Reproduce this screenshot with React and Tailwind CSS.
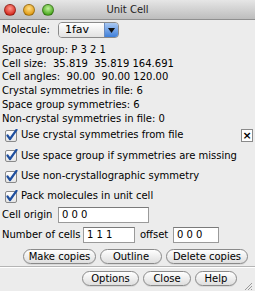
import React from "react";

function Check() {
  return (
    <svg width="13" height="13" viewBox="0 0 13 13" className="shrink-0">
      <defs>
        <linearGradient id="cbg" x1="0" y1="0" x2="0" y2="1">
          <stop offset="0" stopColor="#ffffff" />
          <stop offset="1" stopColor="#e4e4e4" />
        </linearGradient>
      </defs>
      <rect x="0.5" y="1.5" width="11" height="11" rx="1.5" fill="url(#cbg)" stroke="#8a8a8a" />
      <path d="M2.5 6.5 L5 10 L11.5 0.8" fill="none" stroke="#1f4f9e" strokeWidth="2.2" strokeLinecap="round" strokeLinejoin="round" />
    </svg>
  );
}

function Light({ c1, c2 }) {
  return (
    <div
      className="w-[12px] h-[12px] rounded-full border border-black/30"
      style={{ background: `radial-gradient(circle at 50% 35%, ${c1} 0%, ${c2} 75%)` }}
    />
  );
}

function Btn({ w, children }) {
  return (
    <div
      className={`${w} h-[15px] shrink-0 whitespace-nowrap rounded-full border border-[#8a8a8a] bg-gradient-to-b from-white to-[#dedede] flex items-center justify-center leading-[13px] shadow-[0_1px_0_rgba(0,0,0,0.08)]`}
    >
      {children}
    </div>
  );
}

function Entry({ w, children }) {
  return (
    <div className={`${w} h-[16px] shrink-0 whitespace-nowrap bg-white border border-[#9a9a9a] border-t-[#7a7a7a] flex items-center pl-[3px] leading-[14px]`}>
      {children}
    </div>
  );
}

export default function App() {
  return (
    <div className="w-[255px] h-[291px] bg-[#ececec] overflow-hidden flex flex-col text-[10px] text-black whitespace-nowrap font-['DejaVu_Sans',sans-serif]">
      {/* Title bar */}
      <div className="h-[20px] shrink-0 grid grid-cols-[60px_1fr_60px] items-center bg-gradient-to-b from-[#e6e6e6] to-[#bdbdbd] border-b border-[#8f8f8f]">
        <div className="flex items-center gap-[7px] pl-[4px]">
          <Light c1="#ff9a8f" c2="#d62a1e" />
          <Light c1="#ffe08a" c2="#e09a12" />
          <Light c1="#bff29a" c2="#4aa81e" />
        </div>
        <div className="text-center text-[#222] leading-[14px]">Unit Cell</div>
        <div />
      </div>

      {/* Molecule */}
      <div className="mt-[2px] h-[16px] flex items-center pl-[2px]">
        <span className="w-[56px] shrink-0 leading-[14px]">Molecule:</span>
        <div className="w-[61px] h-[16px] flex rounded-[4px] border border-[#8a8a8a] overflow-hidden">
          <div className="flex-1 bg-gradient-to-b from-white to-[#e2e2e2] flex items-center pl-[6px] leading-[14px] text-[11px]">1fav</div>
          <div className="w-[14px] bg-gradient-to-b from-[#a9c8f2] to-[#3e7fd9] border-l border-[#6a8cc0] flex items-center justify-center">
            <svg width="7" height="5" viewBox="0 0 7 5"><path d="M0 0 H7 L3.5 5 Z" fill="#111" /></svg>
          </div>
        </div>
      </div>

      {/* Info */}
      <div className="mt-[5px] pl-[2px] leading-[13.7px]">
        <div>Space group: P 3 2 1</div>
        <div>Cell size:&nbsp; 35.819&nbsp; 35.819 164.691</div>
        <div>Cell angles:&nbsp; 90.00&nbsp; 90.00 120.00</div>
        <div>Crystal symmetries in file: 6</div>
        <div>Space group symmetries: 6</div>
        <div>Non-crystal symmetries in file: 0</div>
      </div>

      {/* Checkboxes */}
      <div className="flex flex-col">
        <div className="h-[20.5px] flex items-center pl-[5px] gap-[3px] leading-[14px]">
          <Check />
          <span>Use crystal symmetries from file</span>
          <div className="ml-auto mr-[2px] w-[12px] h-[13px] bg-white border border-[#8a8a8a] flex items-center justify-center text-[11px] leading-[11px] font-bold">×</div>
        </div>
        <div className="h-[20.5px] flex items-center pl-[5px] gap-[3px] leading-[14px]">
          <Check />
          <span>Use space group if symmetries are missing</span>
        </div>
        <div className="h-[20.5px] flex items-center pl-[5px] gap-[3px] leading-[14px]">
          <Check />
          <span>Use non-crystallographic symmetry</span>
        </div>
        <div className="h-[19px] flex items-center pl-[5px] gap-[3px] leading-[14px]">
          <Check />
          <span>Pack molecules in unit cell</span>
        </div>
      </div>

      {/* Cell origin */}
      <div className="mt-[1px] h-[16px] flex items-center pl-[2px] leading-[14px]">
        <span className="w-[56px] shrink-0">Cell origin</span>
        <Entry w="w-[91px]">0 0 0</Entry>
      </div>
      <div className="mt-[4px] h-[16px] flex items-center pl-[2px] leading-[14px]">
        <span className="w-[81px] shrink-0">Number of cells</span>
        <Entry w="w-[52px]">1 1 1</Entry>
        <span className="ml-[5px] w-[33px] shrink-0">offset</span>
        <Entry w="w-[46px]">0 0 0</Entry>
      </div>

      {/* Copy buttons */}
      <div className="mt-[6px] flex gap-[4px] pl-[23px]">
        <Btn w="w-[73px]">Make copies</Btn>
        <Btn w="w-[62px]">Outline</Btn>
        <Btn w="w-[82px]">Delete copies</Btn>
      </div>

      <div className="mt-[2px] h-px bg-[#b5b5b5] border-b border-white box-content" />

      {/* Bottom buttons */}
      <div className="mt-[3px] flex items-end pl-[82px]">
        <div className="flex gap-[4px]">
          <Btn w="w-[57px]">Options</Btn>
          <Btn w="w-[48px]">Close</Btn>
          <Btn w="w-[42px]">Help</Btn>
        </div>
        <svg width="9" height="9" viewBox="0 0 9 9" className="ml-auto mr-[2px] mb-[-5px]">
          <path d="M1 8 L8 1 M4 8 L8 4 M7 8 L8 7" stroke="#9a9a9a" strokeWidth="1" />
        </svg>
      </div>
    </div>
  );
}
